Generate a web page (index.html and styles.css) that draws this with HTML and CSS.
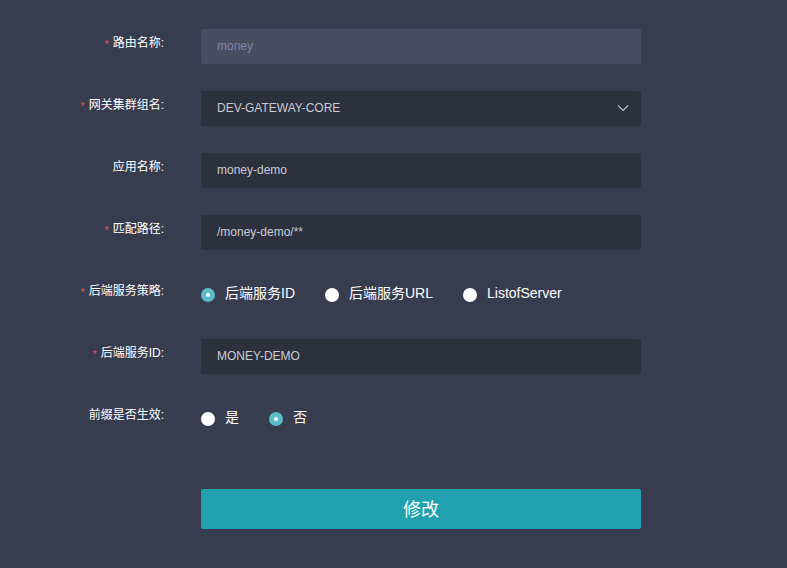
FILE: index.html
```html
<!DOCTYPE html>
<html lang="zh">
<head>
<meta charset="utf-8">
<link rel="stylesheet" href="styles.css">
</head>
<body>
<form class="form">
  <div class="row">
    <label class="label"><span class="req">*</span>路由名称:</label>
    <div class="field"><div class="input disabled">money</div></div>
  </div>
  <div class="row">
    <label class="label"><span class="req">*</span>网关集群组名:</label>
    <div class="field">
      <div class="input select">DEV-GATEWAY-CORE
        <svg class="chev" width="12" height="8" viewBox="0 0 12 8"><path d="M1 1.5 L6 6.5 L11 1.5" fill="none" stroke="#b7bccb" stroke-width="1.2"/></svg>
      </div>
    </div>
  </div>
  <div class="row">
    <label class="label">应用名称:</label>
    <div class="field"><div class="input">money-demo</div></div>
  </div>
  <div class="row">
    <label class="label"><span class="req">*</span>匹配路径:</label>
    <div class="field"><div class="input">/money-demo/**</div></div>
  </div>
  <div class="row">
    <label class="label"><span class="req">*</span>后端服务策略:</label>
    <div class="field radios">
      <span class="radio checked"><i class="dot"></i><span class="rtext">后端服务ID</span></span>
      <span class="radio"><i class="dot"></i><span class="rtext">后端服务URL</span></span>
      <span class="radio"><i class="dot"></i><span class="rtext">ListofServer</span></span>
    </div>
  </div>
  <div class="row">
    <label class="label"><span class="req">*</span>后端服务ID:</label>
    <div class="field"><div class="input">MONEY-DEMO</div></div>
  </div>
  <div class="row">
    <label class="label">前缀是否生效:</label>
    <div class="field radios">
      <span class="radio"><i class="dot"></i><span class="rtext">是</span></span>
      <span class="radio checked"><i class="dot"></i><span class="rtext">否</span></span>
    </div>
  </div>
  <div class="row submit">
    <div class="label"></div>
    <div class="field"><button type="button" class="btn">修改</button></div>
  </div>
</form>
</body>
</html>
```

FILE: styles.css
```css
html, body {
  margin: 0;
  padding: 0;
  background: #383c4f;
  height: 100%;
}
body {
  font-family: "Liberation Sans", Arial, "Noto Sans CJK SC", sans-serif;
  color: #ffffff;
}
.form {
  padding-top: 29px;
  display: flex;
  flex-direction: column;
  gap: 27px;
}
.row {
  display: flex;
  align-items: flex-start;
  height: 35px;
}
.label {
  width: 164px;
  flex: none;
  text-align: right;
  font-size: 12px;
  line-height: 28px;
  font-weight: normal;
  color: #ffffff;
  font-family: "Liberation Sans", "Noto Sans CJK SC", sans-serif;
  margin-right: 37px;
}
.req {
  color: #f0505f;
  font-size: 10px;
  margin-right: 4px;
  position: relative;
  top: 1px;
}
.field {
  width: 440px;
  height: 35px;
}
.input {
  box-sizing: border-box;
  height: 35px;
  background: #2d303d;
  border-radius: 2px;
  padding: 0 16px;
  font-size: 12px;
  line-height: 35px;
  color: #c9ccd6;
  position: relative;
}
.input.disabled {
  background: #4a4d62;
  color: #7f86a3;
}
.chev {
  position: absolute;
  right: 12px;
  top: 13px;
}
.radios {
  display: flex;
  align-items: center;
  gap: 30px;
}
.radio {
  display: flex;
  align-items: center;
  font-size: 14px;
  color: #ffffff;
  font-family: "Liberation Sans", "Noto Sans CJK SC", sans-serif;
}
.rtext {
  line-height: 14px;
  position: relative;
  top: -2px;
}
.dot {
  width: 14px;
  height: 14px;
  border-radius: 50%;
  background: #ffffff;
  margin-right: 10px;
  display: flex;
  align-items: center;
  justify-content: center;
  box-sizing: border-box;
}
.radio.checked .dot {
  background: #5bbcc9;
}
.radio.checked .dot::after {
  content: "";
  width: 4px;
  height: 4px;
  border-radius: 50%;
  background: #ffffff;
}
.submit {
  margin-top: 26px;
  height: 40px;
}
.submit .field {
  height: 40px;
}
.btn {
  width: 440px;
  height: 40px;
  border: none;
  border-radius: 2px;
  background: #21a1ae;
  color: #ffffff;
  font-size: 18px;
  font-family: "Noto Sans CJK SC", sans-serif;
  padding: 0 0 3px;
}
```
